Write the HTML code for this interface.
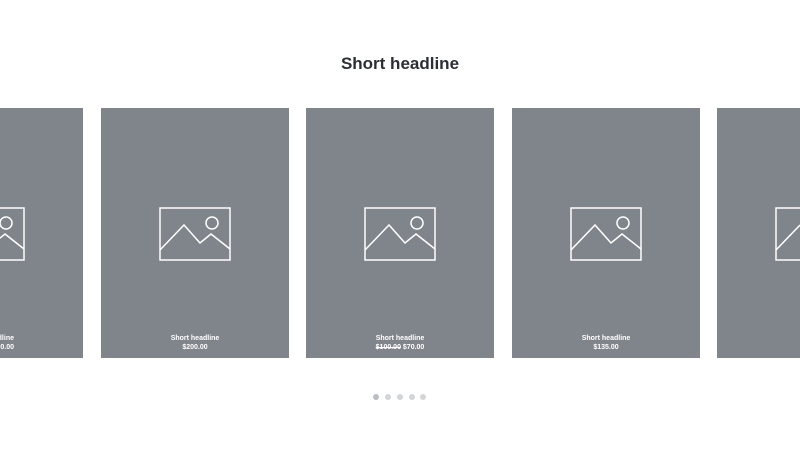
<!DOCTYPE html><html style="overflow:hidden"><head><style>
body{margin:0;width:800px;height:453px;background:#fff;font-family:"Liberation Sans",Arial,sans-serif;position:relative;overflow:hidden}
h1{position:absolute;top:54px;left:0;width:800px;text-align:center;margin:0;font-size:17px;font-weight:bold;color:#2b2e34}
.c{position:absolute;top:108px;width:188px;height:250px;background:#80858c;overflow:hidden}
.c svg{position:absolute;left:58px;top:99px}
.t{position:absolute;top:226px;left:0;width:188px;text-align:center;color:#fff;font-size:7px;line-height:9px;font-weight:bold;white-space:nowrap;overflow:hidden}
.d{position:absolute;top:394px;width:6px;height:6px;border-radius:50%;background:#d3d5d8}
</style></head><body>
<h1>Short headline</h1>
<div class="c" style="left:0;width:83px"><svg style="left:0" width="25" height="54" viewBox="47 0 25 54"><rect x="1" y="1" width="70" height="52" fill="none" stroke="#fff" stroke-width="1.5"/><circle cx="53" cy="16" r="6" fill="none" stroke="#fff" stroke-width="1.5"/><path d="M1 43 L25 18 L41 36 L52 27 L71 42" fill="none" stroke="#fff" stroke-width="1.5"/></svg><div class="t" style="width:14px;direction:rtl;text-align:right"><div>Short headline</div><div>$200.00</div></div></div>
<div class="c" style="left:101px"><svg width="72" height="54" viewBox="0 0 72 54"><rect x="1" y="1" width="70" height="52" fill="none" stroke="#fff" stroke-width="1.5"/><circle cx="53" cy="16" r="6" fill="none" stroke="#fff" stroke-width="1.5"/><path d="M1 43 L25 18 L41 36 L52 27 L71 42" fill="none" stroke="#fff" stroke-width="1.5"/></svg><div class="t">Short headline<br>$200.00</div></div>
<div class="c" style="left:306px"><svg width="72" height="54" viewBox="0 0 72 54"><rect x="1" y="1" width="70" height="52" fill="none" stroke="#fff" stroke-width="1.5"/><circle cx="53" cy="16" r="6" fill="none" stroke="#fff" stroke-width="1.5"/><path d="M1 43 L25 18 L41 36 L52 27 L71 42" fill="none" stroke="#fff" stroke-width="1.5"/></svg><div class="t">Short headline<br><s>$100.00</s> $70.00</div></div>
<div class="c" style="left:512px"><svg width="72" height="54" viewBox="0 0 72 54"><rect x="1" y="1" width="70" height="52" fill="none" stroke="#fff" stroke-width="1.5"/><circle cx="53" cy="16" r="6" fill="none" stroke="#fff" stroke-width="1.5"/><path d="M1 43 L25 18 L41 36 L52 27 L71 42" fill="none" stroke="#fff" stroke-width="1.5"/></svg><div class="t">Short headline<br>$135.00</div></div>
<div class="c" style="left:717px;width:83px"><svg width="25" height="54" viewBox="0 0 25 54"><rect x="1" y="1" width="70" height="52" fill="none" stroke="#fff" stroke-width="1.5"/><path d="M1 43 L25 18" fill="none" stroke="#fff" stroke-width="1.5"/></svg><div class="t" style="width:83px">&nbsp;</div></div>
<div class="d" style="left:373px;background:#b9bcc0"></div><div class="d" style="left:385px"></div><div class="d" style="left:397px"></div><div class="d" style="left:409px"></div><div class="d" style="left:420px"></div>
</body></html>
